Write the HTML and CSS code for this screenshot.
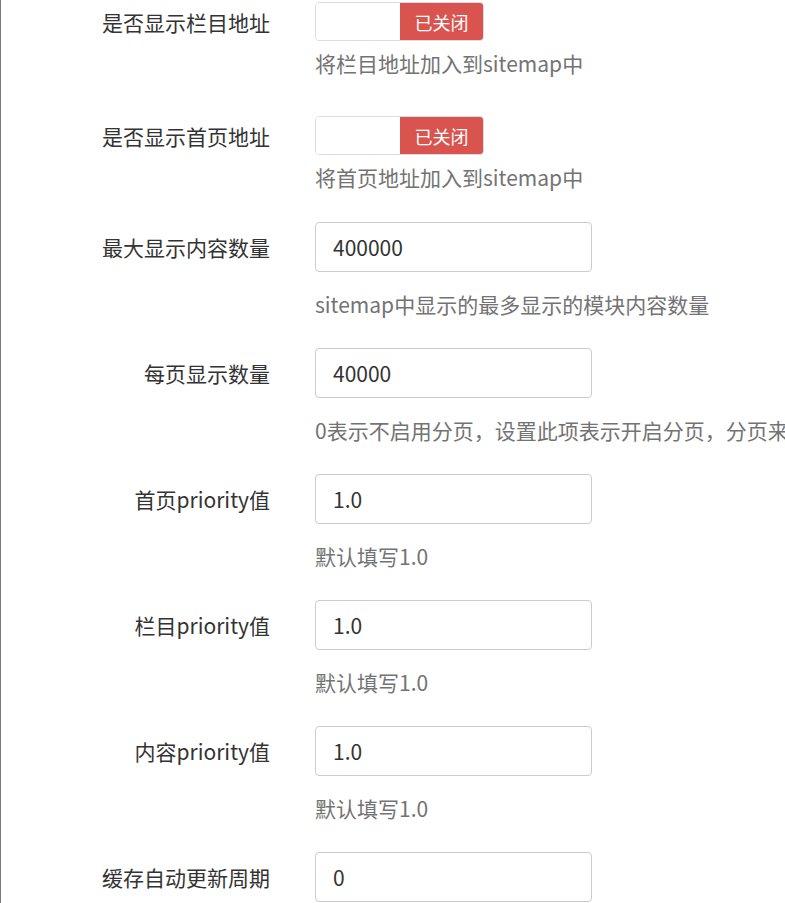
FILE: index.html
```html
<!DOCTYPE html>
<html lang="zh-CN">
<head>
<meta charset="utf-8">
<title>Sitemap设置</title>
<link rel="stylesheet" href="styles.css">
</head>
<body>
<div class="page">
  <div class="row row-switch row-first">
    <label class="label">是否显示栏目地址</label>
    <div class="switch"><span class="switch-blank"></span><span class="switch-off">已关闭</span></div>
    <div class="help">将栏目地址加入到sitemap中</div>
  </div>
  <div class="row row-switch">
    <label class="label">是否显示首页地址</label>
    <div class="switch"><span class="switch-blank"></span><span class="switch-off">已关闭</span></div>
    <div class="help">将首页地址加入到sitemap中</div>
  </div>
  <div class="row row-input">
    <label class="label">最大显示内容数量</label>
    <input class="input" type="text" value="400000">
    <div class="help">sitemap中显示的最多显示的模块内容数量</div>
  </div>
  <div class="row row-input">
    <label class="label">每页显示数量</label>
    <input class="input" type="text" value="40000">
    <div class="help">0表示不启用分页，设置此项表示开启分页，分页来显示sitemap内容</div>
  </div>
  <div class="row row-input">
    <label class="label">首页priority值</label>
    <input class="input" type="text" value="1.0">
    <div class="help">默认填写1.0</div>
  </div>
  <div class="row row-input">
    <label class="label">栏目priority值</label>
    <input class="input" type="text" value="1.0">
    <div class="help">默认填写1.0</div>
  </div>
  <div class="row row-input">
    <label class="label">内容priority值</label>
    <input class="input" type="text" value="1.0">
    <div class="help">默认填写1.0</div>
  </div>
  <div class="row row-input row-last">
    <label class="label">缓存自动更新周期</label>
    <input class="input" type="text" value="0">
  </div>
</div>
</body>
</html>
```
FILE: styles.css
```css
html, body {
  margin: 0;
  padding: 0;
  overflow: hidden;
  background: #fff;
}

body {
  font-family: "Noto Sans CJK SC", "Noto Sans", sans-serif;
  font-size: 21px;
  line-height: 30px;
  color: #333;
}

.page {
  border-left: 1px solid #7a7a7a;
  min-height: 100vh;
  padding-top: 2px;
  box-sizing: border-box;
}

.row {
  display: grid;
  grid-template-columns: 269px 1fr;
  column-gap: 45px;
}

.label {
  grid-column: 1;
  grid-row: 1;
  align-self: center;
  text-align: right;
  white-space: nowrap;
  color: #333;
}

.help {
  grid-column: 2;
  grid-row: 2;
  color: #737373;
  white-space: nowrap;
}

.row-switch {
  margin-bottom: 30px;
}

.row-switch .help {
  margin-top: 7px;
}

.row-switch.row-first {
  margin-bottom: 38px;
}

.row-input {
  margin-bottom: 29px;
}

.row-input .help {
  margin-top: 17px;
}

.switch {
  grid-column: 2;
  grid-row: 1;
  display: flex;
  width: 169px;
  height: 39px;
  box-sizing: border-box;
  border: 1px solid #dcdce6;
  border-radius: 4px;
  overflow: hidden;
}

.switch-blank {
  width: 84px;
  background: #fff;
}

.switch-off {
  flex: 1;
  display: flex;
  align-items: center;
  justify-content: center;
  background: #d9534f;
  color: #fff;
  font-size: 18px;
}

.input {
  grid-column: 2;
  grid-row: 1;
  width: 277px;
  height: 50px;
  box-sizing: border-box;
  border: 1px solid #ccc;
  border-radius: 4px;
  padding: 0 17px;
  margin: 0;
  font-family: "Noto Sans CJK SC", "Noto Sans", sans-serif;
  font-size: 21px;
  color: #333;
  background: #fff;
  outline: none;
}
```
